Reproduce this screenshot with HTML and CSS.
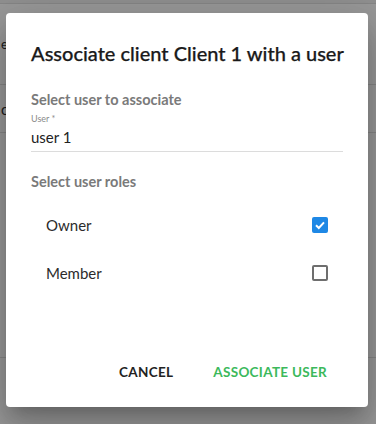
FILE: index.html
```html
<!DOCTYPE html>
<html>
<head>
<meta charset="utf-8">
<link rel="stylesheet" href="styles.css">
</head>
<body>
<div class="page">
  <div class="bg-top"></div>
  <div class="bg-row r1"><span class="bg-text">e</span></div>
  <div class="bg-row r2"><span class="bg-text">o</span></div>
  <div class="bg-rest"></div>
</div>
<div class="backdrop"></div>
<div class="dialog">
  <h2 class="title">Associate client Client 1 with a user</h2>
  <div class="section-label">Select user to associate</div>
  <div class="field">
    <div class="field-label">User *</div>
    <div class="field-value">user 1</div>
  </div>
  <div class="section-label roles-label">Select user roles</div>
  <ul class="roles">
    <li class="role">
      <span class="role-name">Owner</span>
      <span class="check checked">
        <svg viewBox="0 0 16 16" width="16" height="16"><path d="M4 8.3 L6.8 11 L12 5.4" fill="none" stroke="#fff" stroke-width="2"/></svg>
      </span>
    </li>
    <li class="role">
      <span class="role-name">Member</span>
      <span class="check"></span>
    </li>
  </ul>
  <div class="actions">
    <button class="btn cancel">CANCEL</button>
    <button class="btn primary">ASSOCIATE USER</button>
  </div>
</div>
</body>
</html>
```
FILE: styles.css
```css
html, body {
  margin: 0;
  padding: 0;
  width: 376px;
  height: 424px;
  overflow: hidden;
  font-family: "Lato", "Liberation Sans", sans-serif;
}
.page {
  width: 376px;
  height: 424px;
  background: #fff;
  display: flex;
  flex-direction: column;
}
.bg-top {
  height: 3px;
  background: #f0f0f0;
  border-bottom: 1px solid #e0e0e0;
}
.bg-row {
  border-bottom: 1px solid #e0e0e0;
  display: flex;
  align-items: center;
  font-size: 13px;
  color: #333;
}
.r1 { height: 80px; }
.r2 { height: 47px; font-size: 15px; }
.bg-rest {
  height: 224px;
  border-bottom: 1px solid #e0e0e0;
}
.bg-text { padding-left: 1px; }
.backdrop {
  position: absolute;
  inset: 0;
  background: rgba(0, 0, 0, 0.4);
}
.dialog {
  position: absolute;
  left: 6px;
  top: 13px;
  width: 362px;
  height: 394px;
  background: #fff;
  border-radius: 4px;
  box-shadow: 0 11px 15px -7px rgba(0,0,0,0.2), 0 24px 38px 3px rgba(0,0,0,0.14), 0 9px 46px 8px rgba(0,0,0,0.12);
  box-sizing: border-box;
  padding: 0 25px;
  display: flex;
  flex-direction: column;
}
.title {
  margin: 28px 0 0;
  font-size: 20px;
  font-weight: 500;
  color: #1a1a1a;
  line-height: 24px;
  white-space: nowrap;
  letter-spacing: 0;
  -webkit-text-stroke: 0.25px #1a1a1a;
}
.section-label {
  margin-top: 27px;
  font-size: 14.5px;
  font-weight: 700;
  color: #7a7a7a;
  line-height: 16px;
}
.field {
  border-bottom: 1px solid #dcdcdc;
  padding-bottom: 5px;
}
.field-label {
  margin-top: 5px;
  font-size: 9px;
  color: #8a8a8a;
  line-height: 11px;
}
.field-value {
  margin-top: 4px;
  font-size: 15px;
  color: #222;
  line-height: 18px;
}
.roles-label { margin-top: 22px; }
.roles {
  list-style: none;
  margin: 11px 0 0;
  padding: 0 15px;
  display: flex;
  flex-direction: column;
}
.role {
  height: 48px;
  display: flex;
  align-items: center;
  justify-content: space-between;
}
.role-name {
  font-size: 15px;
  color: #2b2b2b;
}
.check {
  width: 16px;
  height: 16px;
  box-sizing: border-box;
  border: 2px solid #6e6e6e;
  border-radius: 2px;
  display: flex;
  align-items: center;
  justify-content: center;
}
.check.checked {
  border: none;
  background: #1e88e5;
}
.actions {
  margin-top: auto;
  margin-bottom: 27px;
  display: flex;
  justify-content: flex-end;
  gap: 40px;
  padding-right: 16px;
}
.btn {
  border: none;
  background: none;
  padding: 0;
  font-family: inherit;
  font-size: 13.5px;
  font-weight: 700;
  letter-spacing: 0.3px;
  line-height: 16px;
}
.cancel { color: #222; }
.primary { color: #3bb95b; }
```
